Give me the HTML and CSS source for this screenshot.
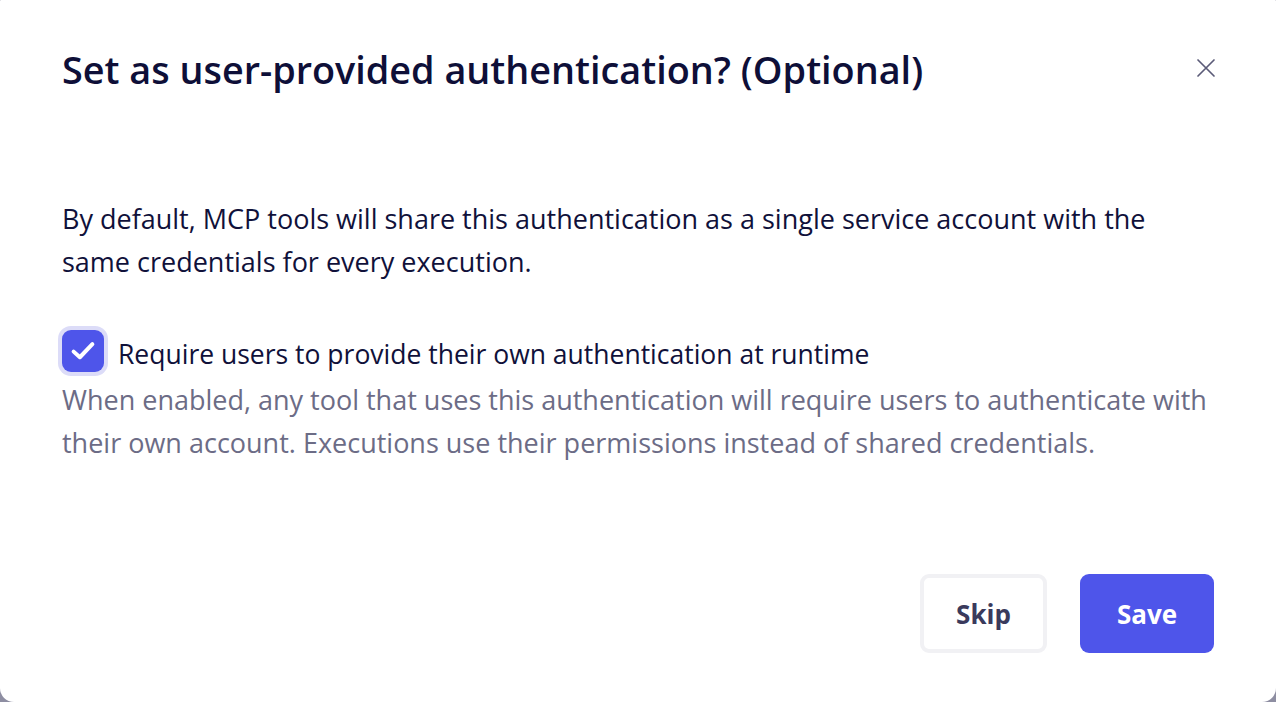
FILE: index.html
```html
<!DOCTYPE html>
<html lang="en">
<head>
<meta charset="utf-8">
<title>Set as user-provided authentication?</title>
<link rel="stylesheet" href="styles.css">
</head>
<body>
<div class="modal">
  <header class="modal-head">
    <h2 class="modal-title">Set as user-provided authentication? (Optional)</h2>
    <button class="close-btn" aria-label="Close">
      <svg viewBox="0 0 20 20" width="20" height="20"><path d="M2 2 L18 18 M18 2 L2 18" stroke="currentColor" stroke-width="1.7" stroke-linecap="round" fill="none"/></svg>
    </button>
  </header>
  <div class="modal-body">
    <p class="intro">By default, MCP tools will share this authentication as a single service account with the same credentials for every execution.</p>
    <div class="option">
      <label class="option-row">
        <span class="checkbox">
          <svg viewBox="0 0 24 24" width="30" height="30"><path d="M4.5 12.5 L9.5 17 L19.5 6.5" stroke="#fff" stroke-width="3.2" stroke-linecap="round" stroke-linejoin="round" fill="none"/></svg>
        </span>
        <span class="option-label">Require users to provide their own authentication at runtime</span>
      </label>
      <p class="option-help">When enabled, any tool that uses this authentication will require users to authenticate with their own account. Executions use their permissions instead of shared credentials.</p>
    </div>
  </div>
  <footer class="modal-foot">
    <button class="btn btn-secondary">Skip</button>
    <button class="btn btn-primary">Save</button>
  </footer>
</div>
</body>
</html>
```
FILE: styles.css
```css
* { box-sizing: border-box; }
html, body { height: 100%; }
body {
  margin: 0;
  background: #8e8ea2;
  font-family: "Open Sans", "Noto Sans", sans-serif;
  color: #10113a;
}
.modal {
  height: 702px;
  background: #fff;
  border-radius: 1px 1px 14px 14px;
  padding: 0 62px;
  display: flex;
  flex-direction: column;
}
.modal-head {
  display: flex;
  align-items: flex-start;
  justify-content: space-between;
  padding-top: 45px;
}
.modal-title {
  margin: 0;
  font-size: 37.8px;
  font-weight: 600;
  line-height: 50px;
  color: #0e0f38;
}
.close-btn {
  border: 0;
  background: none;
  padding: 0;
  margin-top: 13px;
  margin-right: -2px;
  color: #5b5b78;
  width: 20px;
  height: 20px;
  cursor: pointer;
}
.close-btn svg { display: block; }
.modal-body {
  padding-top: 102px;
  flex: 1;
}
.intro {
  margin: 0;
  font-size: 27px;
  line-height: 43px;
  color: #10113a;
}
.option { margin-top: 46px; }
.option-row {
  display: flex;
  align-items: center;
  gap: 14px;
}
.checkbox {
  width: 42px;
  height: 42px;
  flex: none;
  border-radius: 9px;
  background: #4e55ea;
  box-shadow: 0 0 0 4px #dcdcf8;
  display: flex;
  align-items: center;
  justify-content: center;
}
.option-label {
  font-size: 26.5px;
  line-height: 43px;
  color: #10113a;
  position: relative;
  top: 4px;
}
.option-help {
  margin: 6px 0 0;
  font-size: 27px;
  line-height: 43px;
  color: #6c6c86;
}
.modal-foot {
  display: flex;
  justify-content: flex-end;
  gap: 33px;
  padding-bottom: 49px;
}
.btn {
  height: 79px;
  border-radius: 9px;
  font-family: inherit;
  font-size: 26px;
  font-weight: 700;
  cursor: pointer;
}
.btn-secondary {
  width: 127px;
  background: #fff;
  border: 4px solid #f1f1f4;
  color: #3a3a5c;
}
.btn-primary {
  width: 134px;
  background: #4e55ea;
  border: 0;
  color: #fff;
}
```
